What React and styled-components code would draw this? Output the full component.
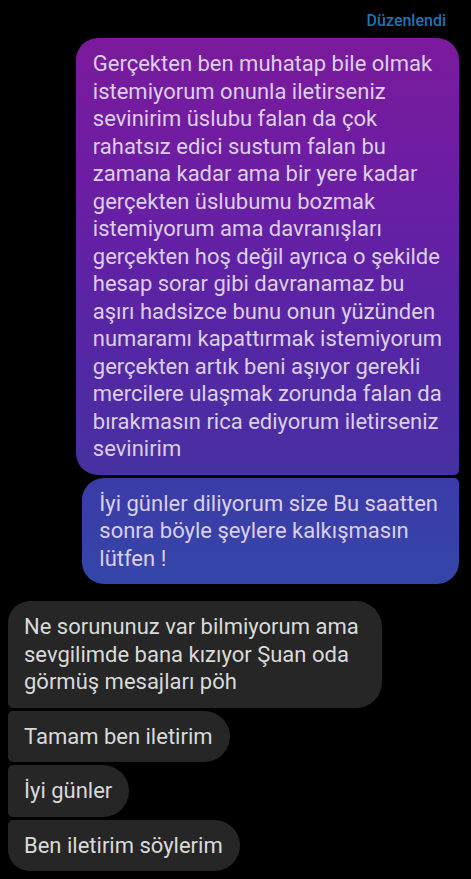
import React from 'react'
import styled, { createGlobalStyle } from 'styled-components';

const GlobalStyle = createGlobalStyle`
  html, body {
    margin: 0;
    padding: 0;
    background: #000;
  }
  body {
    font-family: Roboto, "Noto Sans", "Liberation Sans", sans-serif;
    -webkit-font-smoothing: antialiased;
  }
`;

const sent = [
    {
        text: `Gerçekten ben muhatap bile olmak
istemiyorum onunla iletirseniz
sevinirim üslubu falan da çok
rahatsız edici sustum falan bu
zamana kadar ama bir yere kadar
gerçekten üslubumu bozmak
istemiyorum ama davranışları
gerçekten hoş değil ayrıca o şekilde
hesap sorar gibi davranamaz bu
aşırı hadsizce bunu onun yüzünden
numaramı kapattırmak istemiyorum
gerçekten artık beni aşıyor gerekli
mercilere ulaşmak zorunda falan da
bırakmasın rica ediyorum iletirseniz
sevinirim`,
        pos: 'first',
        tone: 'purple',
    },
    {
        text: `İyi günler diliyorum size Bu saatten
sonra böyle şeylere kalkışmasın
lütfen !`,
        pos: 'last',
        tone: 'blue',
    },
];

const received = [
    { text: `Ne sorununuz var bilmiyorum ama
sevgilimde bana kızıyor Şuan oda
görmüş mesajları pöh`, pos: 'first' },
    { text: 'Tamam ben iletirim', pos: 'middle' },
    { text: 'İyi günler', pos: 'middle' },
    { text: 'Ben iletirim söylerim', pos: 'last' },
];

const App = () => {
    return (
        <>
            <GlobalStyle />
            <Screen>
                <Edited>Düzenlendi</Edited>
                <Group side="right">
                    {sent.map((m, i) => (
                        <SentBubble key={i} pos={m.pos} tone={m.tone}>{m.text}</SentBubble>
                    ))}
                </Group>
                <Group side="left">
                    {received.map((m, i) => (
                        <ReceivedBubble key={i} pos={m.pos}>{m.text}</ReceivedBubble>
                    ))}
                </Group>
            </Screen>
        </>
    )
};

const Screen = styled.div`
    width: 471px;
    height: 879px;
    overflow: hidden;
    background: #000;
    display: flex;
    flex-direction: column;
    box-sizing: border-box;
    padding: 12px 12px 0 8px;
`;

const Edited = styled.div`
    align-self: flex-end;
    margin-right: 13px;
    font-size: 16px;
    font-weight: 500;
    line-height: 18px;
    color: #2073b4;
    margin-bottom: 8px;
`;

const Group = styled.div`
    display: flex;
    flex-direction: column;
    align-items: ${p => p.side === 'right' ? 'flex-end' : 'flex-start'};
    gap: 3px;
    margin-bottom: 17px;
`;

const Bubble = styled.div`
    white-space: pre-line;
    font-size: 22px;
    line-height: 27.5px;
    padding: 12px 16px;
    box-sizing: border-box;
`;

const SentBubble = styled(Bubble)`
    padding-left: ${p => p.tone === 'purple' ? '17px' : '17px'};
    padding-right: ${p => p.tone === 'purple' ? '17px' : '21px'};
    color: #dccfec;
    background: ${p => p.tone === 'purple'
        ? 'linear-gradient(180deg, #7b1a9c 0%, #6a1ea4 35%, #5526a4 70%, #4631a2 100%)'
        : 'linear-gradient(180deg, #3c3ba7 0%, #3446a9 100%)'};
    border-radius: ${p => p.pos === 'first' ? '22px 22px 5px 22px' : '22px 5px 22px 22px'};
`;

const ReceivedBubble = styled(Bubble)`
    padding-right: ${p => p.pos === 'first' ? '23px' : '17px'};
    color: #dadada;
    background: #262626;
    border-radius: ${p => p.pos === 'first'
        ? '22px 26px 26px 5px'
        : p.pos === 'last' ? '5px 26px 26px 22px' : '5px 26px 26px 5px'};
`;

export default App;
